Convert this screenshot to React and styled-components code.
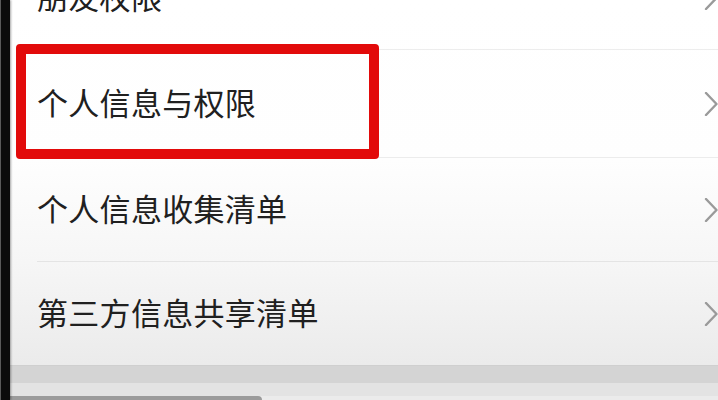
import React from "react";
import styled, { createGlobalStyle } from "styled-components";

const Global = createGlobalStyle`
  html, body { margin: 0; padding: 0; background: #e2e2e2; overflow: hidden; }
  #root { width: 718px; height: 400px; }
`;

const Page = styled.div`
  display: flex;
  width: 718px;
  height: 400px;
  overflow: hidden;
`;

const Bezel = styled.div`
  flex: 0 0 9px;
  background: #0b0b0b;
  border-left: 1px solid #5a5a5a;
  box-shadow: 1px 0 2px rgba(0, 0, 0, 0.35);
  z-index: 1;
`;

const Screen = styled.div`
  flex: 1;
  display: flex;
  flex-direction: column;
  min-width: 0;
  background: linear-gradient(
    to bottom,
    #ffffff 0px,
    #fefefe 160px,
    #f6f6f6 262px,
    #ebebeb 364px
  );
`;

const List = styled.div`
  display: flex;
  flex-direction: column;
  margin-top: -54px;
`;

const Row = styled.div`
  position: relative;
  display: flex;
  align-items: center;
  box-sizing: border-box;
  height: ${(p) => p.$height || 103}px;
  padding-left: 27px;
  font-family: "Noto Sans CJK SC", "Noto Sans", sans-serif;
  font-size: 31px;
  color: #202020;
  letter-spacing: 0.3px;
`;

const Label = styled.span`
  flex: 1;
  line-height: 1;
  margin-bottom: 4px;
`;

const Chevron = styled.svg`
  flex: 0 0 14px;
  width: 14px;
  height: 24px;
`;

const Divider = styled.div`
  height: 1px;
  margin-left: 27px;
  background: rgba(0, 0, 0, 0.07);
`;

const Highlight = styled.div`
  position: absolute;
  left: 6px;
  top: -6px;
  width: 363px;
  height: 115px;
  box-sizing: border-box;
  border: 10px solid #e20a0a;
  border-radius: 4px;
  pointer-events: none;
`;

const Band = styled.div`
  height: 18px;
  background: #d4d4d4;
  border-top: 1px solid #cfcfcf;
  box-sizing: border-box;
`;

const Gap = styled.div`
  height: 14px;
  background: #e3e3e3;
`;

const HomeBar = styled.div`
  width: 252px;
  height: 4px;
  background: #9b9b9b;
  border-top-right-radius: 4px;
`;

const Arrow = () => (
  <Chevron viewBox="0 0 14 24">
    <path
      d="M2 1 L12.5 12 L2 23"
      fill="none"
      stroke="#9a9a9a"
      strokeWidth="2.4"
      strokeLinecap="round"
      strokeLinejoin="round"
    />
  </Chevron>
);

const items = [
  { label: "朋友权限" },
  { label: "个人信息与权限", highlight: true, height: 107 },
  { label: "个人信息收集清单" },
  { label: "第三方信息共享清单" },
];

export default function App() {
  return (
    <>
      <Global />
      <Page>
        <Bezel />
        <Screen>
          <List>
            {items.map((it, i) => (
              <React.Fragment key={it.label}>
                {i > 0 && <Divider />}
                <Row $height={it.height}>
                  <Label>{it.label}</Label>
                  <Arrow />
                  {it.highlight && <Highlight />}
                </Row>
              </React.Fragment>
            ))}
          </List>
          <Band />
          <Gap />
          <HomeBar />
        </Screen>
      </Page>
    </>
  );
}
